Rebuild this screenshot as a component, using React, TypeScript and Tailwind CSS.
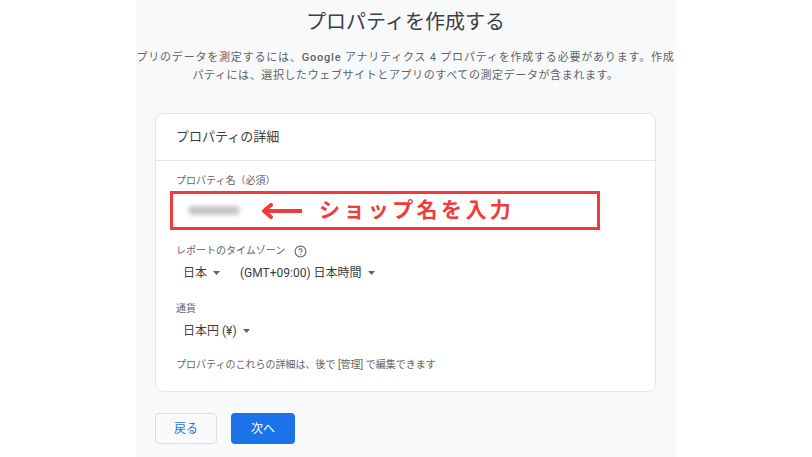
import React from 'react';
import { CircleHelp } from 'lucide-react';

const Caret: React.FC = () => (
  <svg width="7" height="4" viewBox="0 0 7 4" className="ml-[6px] inline-block">
    <path d="M0 0 L7 0 L3.5 4 Z" fill="#5f6368" />
  </svg>
);

const App: React.FC = () => {
  return (
    <div
      className="flex min-h-[457px] w-full justify-center bg-white"
      style={{ fontFamily: 'Roboto, "Noto Sans CJK JP", sans-serif' }}
    >
      <div className="h-[457px] w-[540px] overflow-hidden bg-[#f8f9fa] pl-[19px] pr-[20px]">
        <h1 className="pt-[8px] text-center text-[20px] leading-[28px] text-[#3c4043]">
          プロパティを作成する
        </h1>

        <div className="-mx-[19px] mt-[13px] overflow-hidden text-[11px] leading-[18px] text-[#5f6368]">
          <p className="whitespace-nowrap text-center tracking-[0.8px]">
            プリのデータを測定するには、<span className="font-medium">Google</span> アナリティクス 4 プロパティを作成する必要があります。作成
          </p>
          <p className="whitespace-nowrap text-center tracking-[0.6px]">
            パティには、選択したウェブサイトとアプリのすべての測定データが含まれます。
          </p>
        </div>

        <div className="mt-[28px] rounded-[8px] border border-[#e3e5e8] bg-white">
          <div className="flex h-[47px] items-center border-b border-[#e3e5e8] px-[20px] text-[13px] text-[#3c4043]">
            プロパティの詳細
          </div>

          <div className="px-[20px] pb-[19px] pt-[13px]">
            <div className="text-[10px] leading-[14px] text-[#5f6368]">プロパティ名（必須）</div>

            <div className="-ml-[6px] mt-[3px] flex h-[39px] w-[430px] items-center border-[3px] border-[#f23a3a]">
              <div className="ml-[15px] h-[9px] w-[52px] rounded-full bg-[#c4c6c9] blur-[2px]" />
              <svg width="42" height="16" viewBox="0 0 42 16" className="ml-[21px]">
                <path d="M41 8 L5 8" stroke="#f23a3a" strokeWidth="4" />
                <path d="M10 2 L3 8 L10 14" stroke="#f23a3a" strokeWidth="4" fill="none" strokeLinecap="round" strokeLinejoin="round" />
              </svg>
              <span className="ml-[16px] text-[21px] font-bold leading-none tracking-[3.4px] text-[#f23a3a]">
                ショップ名を入力
              </span>
            </div>

            <div className="mt-[14px] flex items-center text-[10px] leading-[14px] text-[#5f6368]">
              レポートのタイムゾーン
              <CircleHelp size={13} strokeWidth={2} className="ml-[9px] text-[#5f6368]" />
            </div>
            <div className="mt-[6px] flex items-center pl-[7px] text-[12px] leading-[18px] text-[#3c4043]">
              <span className="flex items-center">
                日本
                <Caret />
              </span>
              <span className="ml-[20px] flex items-center">
                (GMT+09:00) 日本時間
                <Caret />
              </span>
            </div>

            <div className="mt-[20px] text-[10px] leading-[14px] text-[#5f6368]">通貨</div>
            <div className="mt-[6px] flex items-center pl-[7px] text-[12px] leading-[18px] text-[#3c4043]">
              日本円 (¥)
              <Caret />
            </div>

            <div className="mt-[18px] text-[10px] leading-[14px] text-[#5f6368]">
              プロパティのこれらの詳細は、後で [管理] で編集できます
            </div>
          </div>
        </div>

        <div className="mt-[21px] flex gap-[14px]">
          <button className="h-[31px] w-[62px] rounded-[4px] border border-[#dadce0] bg-[#fafafa] text-[12px] text-[#1a73e8]">
            戻る
          </button>
          <button className="h-[31px] w-[64px] rounded-[4px] bg-[#1a73e8] text-[12px] text-white">
            次へ
          </button>
        </div>
      </div>
    </div>
  );
};

export default App;
